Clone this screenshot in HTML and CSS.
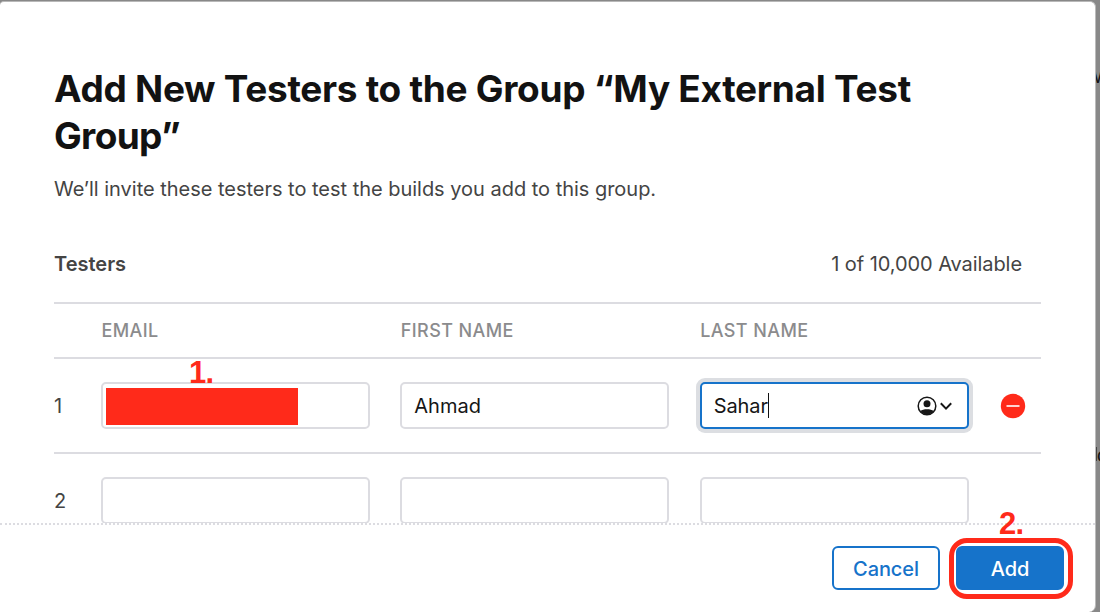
FILE: index.html
```html
<!DOCTYPE html>
<html lang="en">
<head>
<meta charset="utf-8">
<title>Add New Testers</title>
<link rel="stylesheet" href="styles.css">
</head>
<body>
<div class="backdrop"><span class="peek peek-top">w</span><span class="peek-bar"></span><span class="peek peek-low">ld</span></div>
<main class="modal">
  <div class="content">
    <h1 class="title"><span class="title-first">Add New Testers to the Group “My External Test</span><br><span class="title-second">Group”</span></h1>
    <p class="intro">We’ll invite these testers to test the builds you add to this group.</p>
    <div class="summary"><strong class="summary-name">Testers</strong><span class="available">1 of 10,000 Available</span></div>
    <div class="row head"><span></span><span>EMAIL</span><span>FIRST NAME</span><span>LAST NAME</span></div>
    <div class="row entry">
      <span class="number">1</span>
      <div class="field email"><span class="redaction"></span><b class="note note-one">1.</b></div>
      <div class="field"><span>Ahmad</span></div>
      <div class="field focused"><span class="last-value">Sahar</span><i class="caret"></i>
        <svg class="contact" width="36" height="20" viewBox="0 0 36 20" fill="none">
          <circle cx="10" cy="10" r="8.8" stroke="#161616" stroke-width="1.5"/>
          <circle cx="10" cy="7.8" r="3.5" fill="#161616"/>
          <path d="M3.4 15C6 12.7 14 12.7 16.6 15C13 20 7 20 3.4 15Z" fill="#161616"/>
          <path d="M23.8 7.2L29 12.6L34.2 7.2" stroke="#161616" stroke-width="2"/>
        </svg>
      </div>
      <svg class="remove" width="26" height="26" viewBox="0 0 26 26"><circle cx="13" cy="13" r="12.2" fill="#ff2a1a"/><path d="M6.5 13H19.5" stroke="#fff" stroke-width="1.6"/></svg>
    </div>
    <div class="row entry">
      <span class="number">2</span><div class="field"></div><div class="field"></div><div class="field"></div>
    </div>
  </div>
  <footer class="footer">
    <button class="button cancel">Cancel</button>
    <button class="button add">Add<span class="ring"></span><b class="note note-two">2.</b></button>
  </footer>
</main>
</body>
</html>
```
FILE: styles.css
```css
* { box-sizing: border-box; }
body { margin: 0; width: 1100px; height: 612px; overflow: hidden; position: relative; background: #888; font-family: Inter, sans-serif; color: #444; font-size: 20px; }
.backdrop { position: absolute; inset: 0; overflow: hidden; }
.peek { position: absolute; color: #161616; font-size: 20px; line-height: 24px; }
.peek-top { left: 1093px; top: 64px; }
.peek-low { left: 1092px; top: 443px; }
.peek-bar { position: absolute; left: 1095px; top: 447px; width: 2px; height: 14px; background: #444; }
.modal { position: relative; width: 1096px; height: 611px; margin-top: 1px; background: #fff; border-top: 1px solid #b8b8b8; border-right: 1px solid #bbb; border-radius: 4px 6px 7px 0; display: flex; flex-direction: column; overflow: hidden; }
.content { height: 521px; padding: 63px 54px 0; overflow: hidden; flex: none; }
.title { margin: 0; color: #121212; font-size: 37px; font-weight: 700; line-height: 47px; white-space: nowrap; }
.title-first { letter-spacing: -.3px; }
.title-second { letter-spacing: -.65px; }
.intro { margin: 17px 0 0; line-height: 26px; white-space: nowrap; letter-spacing: -.02px; }
.summary { display: flex; justify-content: space-between; align-items: center; height: 26px; margin-top: 49px; padding-right: 19px; }
.summary-name { font-weight: 600; }
.available { letter-spacing: -.07px; }
.row { display: grid; grid-template-columns: 17px 269px 269px 269px 26px; column-gap: 30.4px; align-items: center; width: 987px; border-bottom: 2px solid #dcdce1; }
.head { margin-top: 25px; height: 57px; border-top: 2px solid #dcdce1; color: #8b8b8d; font-size: 18px; font-weight: 500; letter-spacing: .4px; }
.entry { height: 95px; }
.number { white-space: nowrap; }
.field { position: relative; left: -.5px; height: 47px; border: 2px solid #dcdce1; border-radius: 5px; background: #fff; display: flex; align-items: center; padding: 0 12px; color: #161616; }
.email { padding: 0 3px; }
.redaction { width: 192px; height: 37px; margin-top: 1px; background: #ff2a1a; }
.focused { border-color: #1673ca; box-shadow: 0 0 0 4px #dcdee2; }
.last-value { letter-spacing: -.1px; }
.caret { width: 1.5px; height: 25px; background: #111; margin-left: 0; }
.contact { margin-left: auto; margin-right: 2px; }
.note { position: absolute; color: #ff2a1a; font: 700 31px/31px "Liberation Sans", sans-serif; letter-spacing: -.7px; }
.note-one { left: 86px; top: -27px; }
.note-two { left: 41px; top: -40px; }
.footer { flex: 1; border-top: 2px dotted #dcdce1; display: flex; justify-content: flex-end; align-items: flex-start; gap: 16px; padding: 21px 31px 0 0; }
.button { position: relative; width: 108px; height: 44px; padding: 2px 0 0; border: 2px solid #1673ca; border-radius: 6px; background: #fff; color: #1673ca; font: 500 20px/24px Inter, sans-serif; letter-spacing: -.1px; }
.add { background: #1673ca; color: #fff; }
.ring { position: absolute; left: -9px; top: -10px; width: 124px; height: 61px; border: 5px solid #ff2a1a; border-radius: 18px; }
```
